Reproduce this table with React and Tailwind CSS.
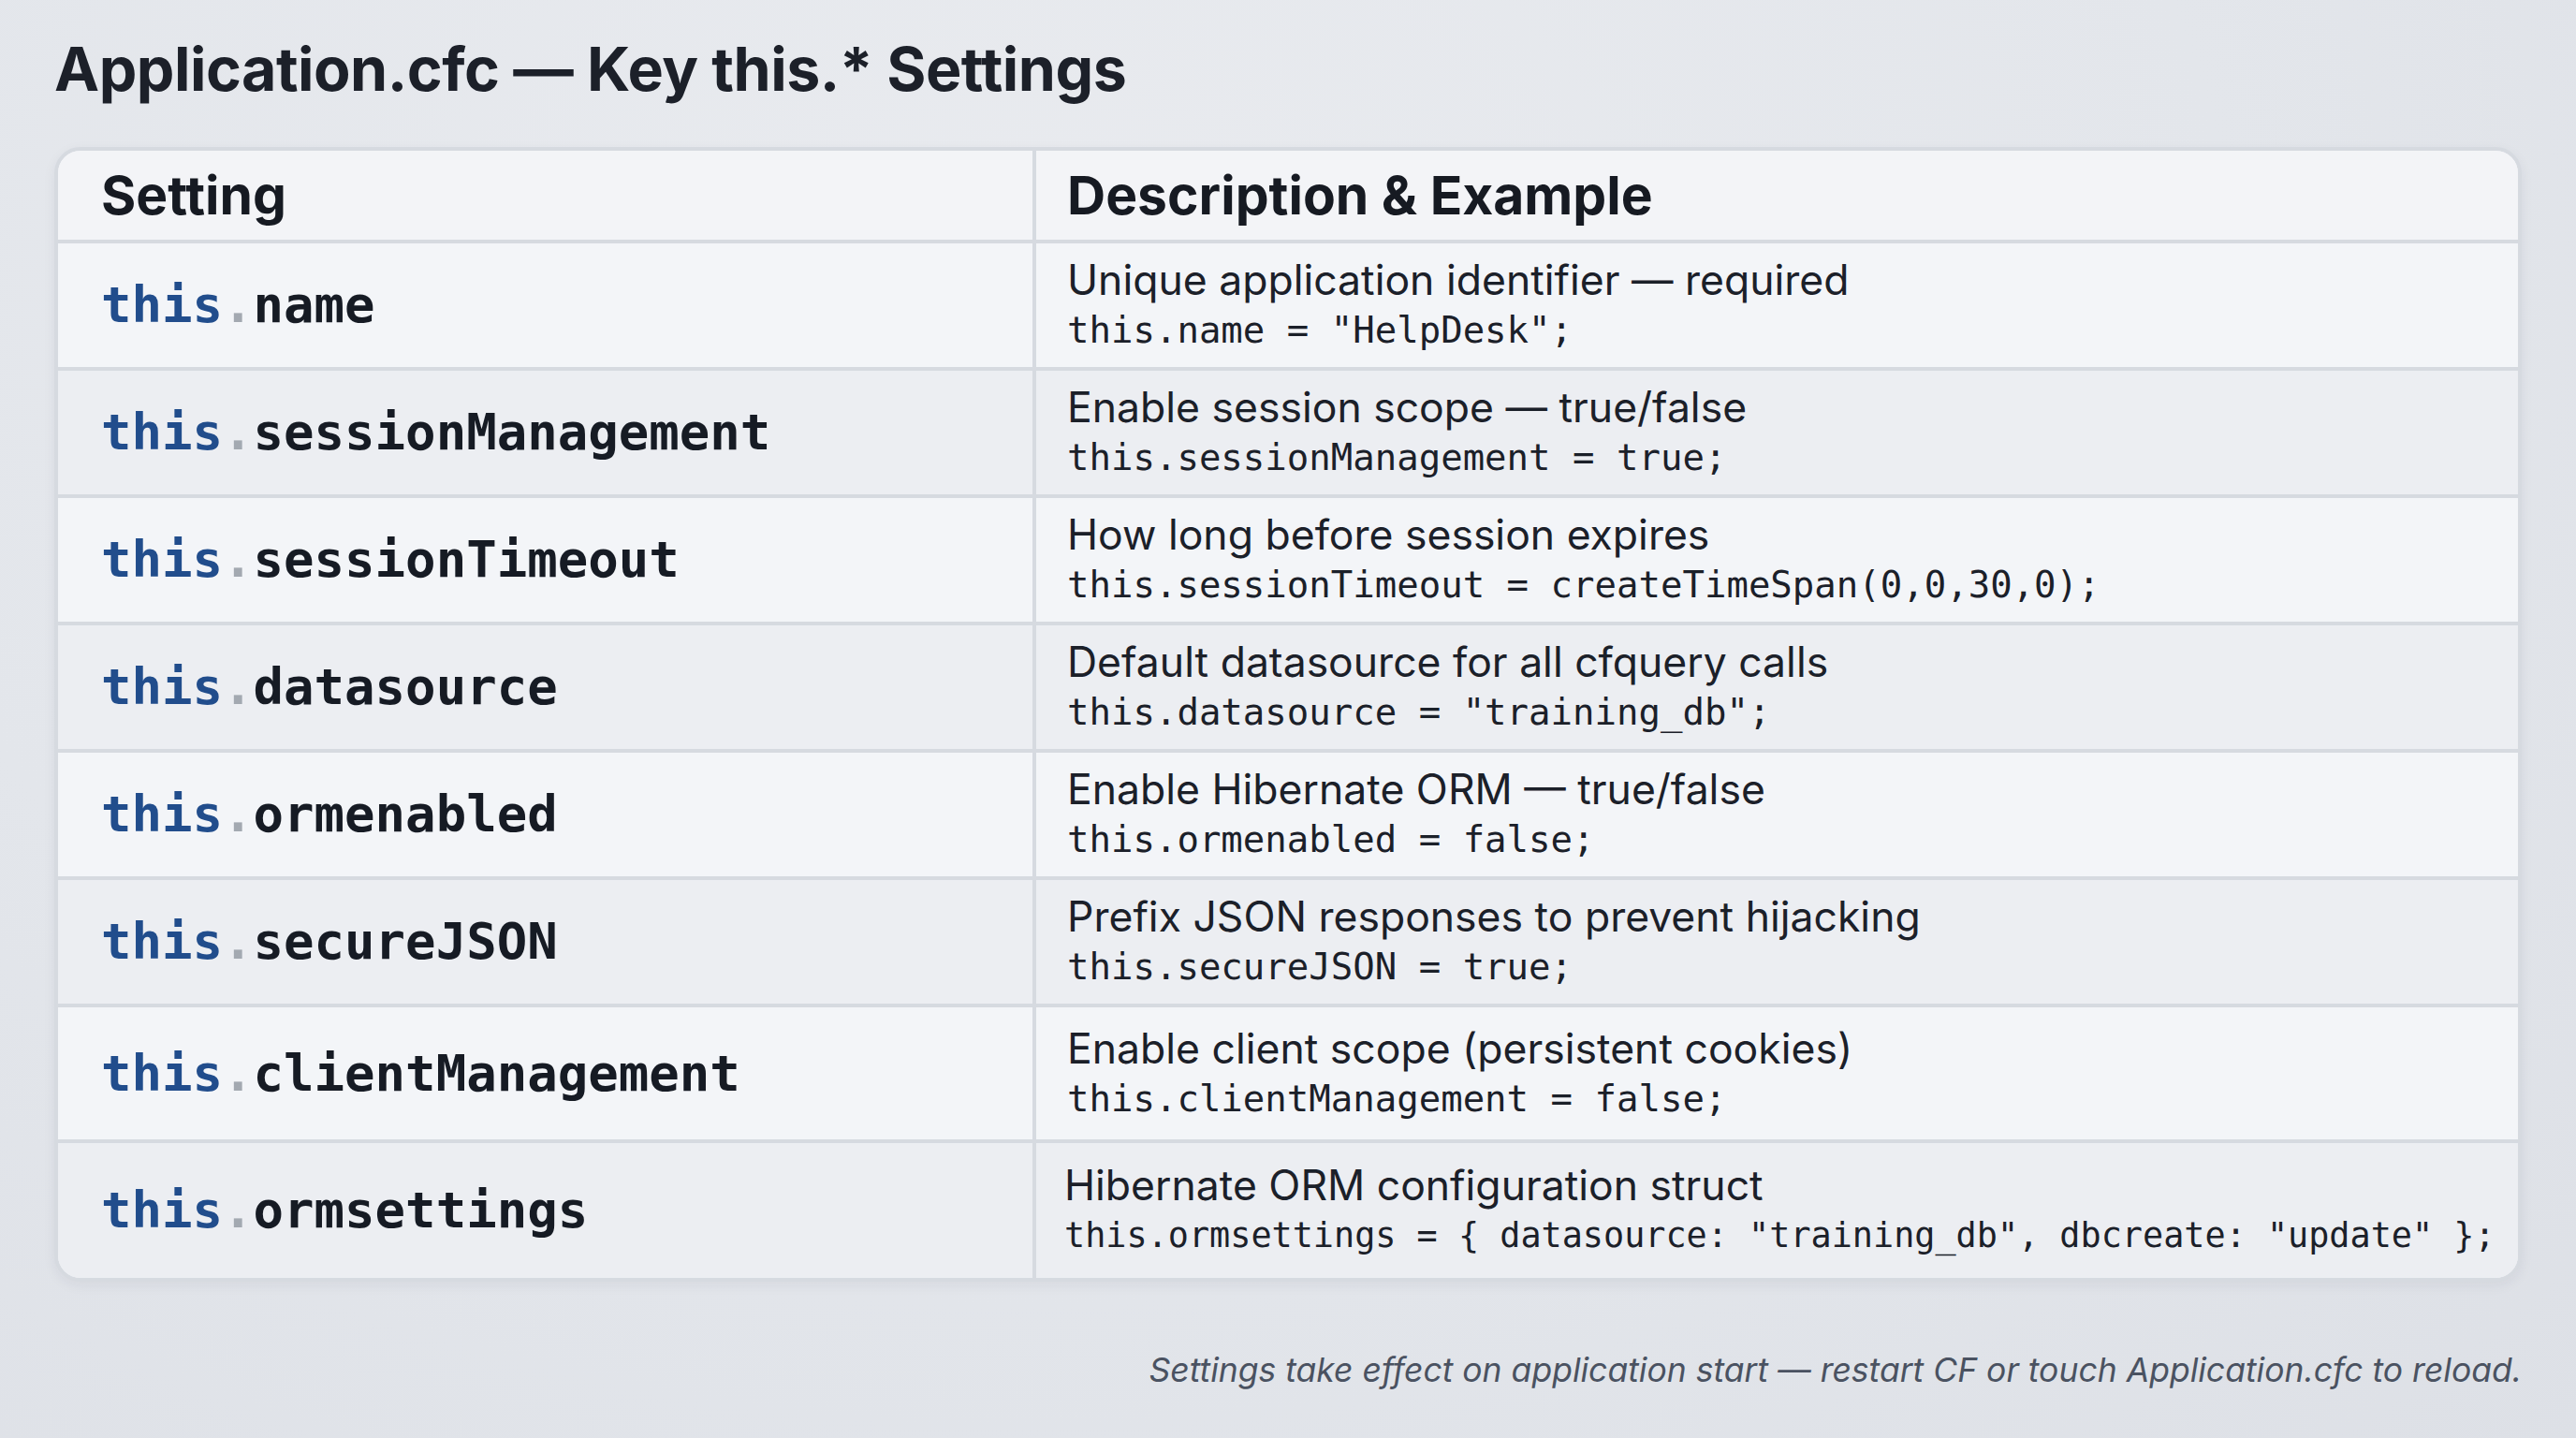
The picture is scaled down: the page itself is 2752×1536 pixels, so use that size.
import React from "react";

const rows = [
  { key: "name", desc: "Unique application identifier — required", code: 'this.name = "HelpDesk";' },
  { key: "sessionManagement", desc: "Enable session scope — true/false", code: "this.sessionManagement = true;" },
  { key: "sessionTimeout", desc: "How long before session expires", code: "this.sessionTimeout = createTimeSpan(0,0,30,0);" },
  { key: "datasource", desc: "Default datasource for all cfquery calls", code: 'this.datasource = "training_db";' },
  { key: "ormenabled", desc: "Enable Hibernate ORM — true/false", code: "this.ormenabled = false;" },
  { key: "secureJSON", desc: "Prefix JSON responses to prevent hijacking", code: "this.secureJSON = true;" },
  { key: "clientManagement", desc: "Enable client scope (persistent cookies)", code: "this.clientManagement = false;" },
  { key: "ormsettings", desc: "Hibernate ORM configuration struct", code: 'this.ormsettings = { datasource: "training_db", dbcreate: "update" };' },
];

const sans = "font-['Inter','Noto_Sans',sans-serif]";
const mono = "font-['DejaVu_Sans_Mono','Liberation_Mono',monospace]";

function Row({ r, i }) {
  const even = i % 2 === 1;
  const last = i === rows.length - 1;
  const h = i < 6 ? "h-[136px]" : last ? "h-[144px]" : "h-[145px]";
  return (
    <div
      className={
        "flex " +
        (even ? "bg-[#eceef2] " : "bg-[#f3f5f8] ") +
        (last ? "" : "border-b-4 border-[#d6dae0] ") +
        h
      }
    >
      <div className="w-[1045px] shrink-0 border-r-4 border-[#d6dae0] flex items-center pl-[46px]">
        <span className={mono + " text-[54px] font-bold leading-none"}>
          <span className="text-[#214d8c]">this</span>
          <span className="text-[#a3a9b1]">.</span>
          <span className="text-[#161b24]">{r.key}</span>
        </span>
      </div>
      <div className={"flex-1 flex flex-col justify-center " + (last ? "pl-[30px]" : "pl-[33px]")}>
        <div className={sans + " text-[44.5px] leading-[53px] text-[#1b2029] whitespace-nowrap"}>{r.desc}</div>
        <div
          className={
            mono +
            (last ? " text-[36.8px]" : " text-[39px]") +
            " leading-[53px] text-[#1b2029] whitespace-nowrap"
          }
        >
          {r.code}
        </div>
      </div>
    </div>
  );
}

export default function App() {
  return (
    <div className="w-[2752px] h-[1536px] overflow-hidden bg-[#e3e6eb] bg-[radial-gradient(ellipse_at_40%_20%,#e9ebef_0%,#e3e6eb_55%,#dde0e6_100%)] px-[58px] pt-[34px]">
      <h1 className={sans + " text-[64.5px] leading-[80px] font-bold text-[#1c2029] tracking-[-0.5px]"}>
        Application.cfc — Key this.* Settings
      </h1>
      <div className="mt-[43px] rounded-[28px] border-4 border-[#d6dae0] overflow-hidden bg-[#f3f5f8] shadow-[0_4px_14px_rgba(30,40,60,0.06)]">
        <div className="flex h-[99px] bg-[#f3f4f7] border-b-4 border-[#d6dae0]">
          <div className="w-[1045px] shrink-0 border-r-4 border-[#d6dae0] flex items-center pl-[46px]">
            <span className={sans + " text-[57px] font-bold text-[#161a22] leading-none"}>Setting</span>
          </div>
          <div className="flex-1 flex items-center pl-[33px]">
            <span className={sans + " text-[57px] font-bold text-[#161a22] leading-none"}>Description &amp; Example</span>
          </div>
        </div>
        {rows.map((r, i) => (
          <Row key={r.key} r={r} i={i} />
        ))}
      </div>
      <div className="mt-[71px] flex justify-end">
        <span className={sans + " italic text-[35.5px] leading-[48px] text-[#4a5261]"}>
          Settings take effect on application start — restart CF or touch Application.cfc to reload.
        </span>
      </div>
    </div>
  );
}
